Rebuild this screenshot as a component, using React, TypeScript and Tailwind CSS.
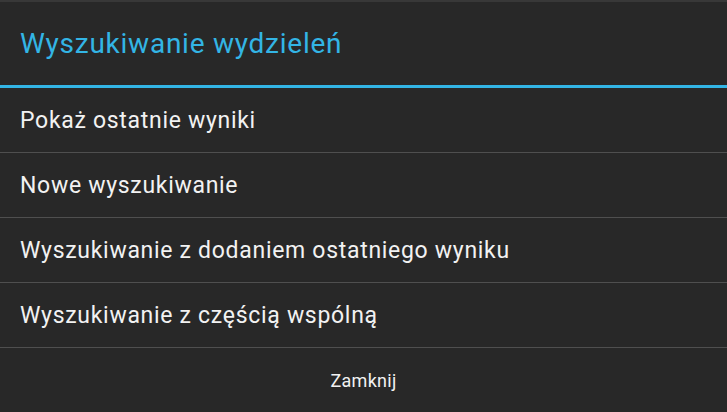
import { FC } from "react";

const items = [
  "Pokaż ostatnie wyniki",
  "Nowe wyszukiwanie",
  "Wyszukiwanie z dodaniem ostatniego wyniku",
  "Wyszukiwanie z częścią wspólną",
];

const App: FC = () => {
  return (
    <div className="w-[727px] h-[412px] bg-[#282828] flex flex-col overflow-hidden font-['Roboto',sans-serif]">
      {/* Title */}
      <div className="h-[85px] flex items-center px-5 border-t-2 border-[#383838] shrink-0">
        <h1 className="text-[28px] text-[#33b5e5] tracking-[0.75px]">Wyszukiwanie wydzieleń</h1>
      </div>
      <div className="h-[3px] bg-[#33b5e5] shrink-0" />

      {/* Options */}
      <ul className="flex flex-col">
        {items.map(label => (
          <li
            key={label}
            className="h-[65px] flex items-center px-5 pt-[2px] border-b border-[#4f4f4f] text-[23px] tracking-[0.7px] text-[#f2f2f2]"
          >
            {label}
          </li>
        ))}
      </ul>

      {/* Button */}
      <button className="flex-1 flex items-center justify-center text-[18px] tracking-[0.3px] text-[#f2f2f2]">
        Zamknij
      </button>
    </div>
  );
};

export default App;
